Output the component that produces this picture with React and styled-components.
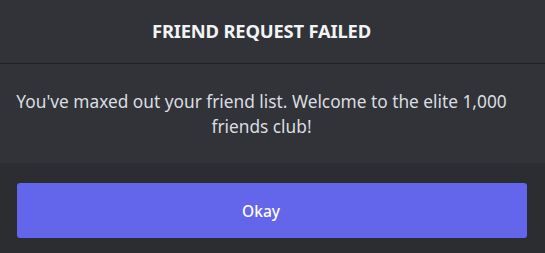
import React from "react";
import styled, { createGlobalStyle } from "styled-components";

const GlobalStyle = createGlobalStyle`
  html, body {
    margin: 0;
    padding: 0;
    background: #313338;
  }
  body {
    font-family: "Noto Sans", "Open Sans", sans-serif;
  }
`;

export default function App() {
  return (
    <>
      <GlobalStyle />
      <Modal>
        <Header>
          <Title>FRIEND REQUEST FAILED</Title>
        </Header>
        <Body>
          <Message>
            You've maxed out your friend list. Welcome to the elite 1,000
            friends club!
          </Message>
        </Body>
        <Footer>
          <Button>Okay</Button>
        </Footer>
      </Modal>
    </>
  );
}

// Styled Components
const Modal = styled.div`
  display: flex;
  flex-direction: column;
  width: 545px;
  height: 253px;
  background: #313338;
`;

const Header = styled.div`
  display: flex;
  align-items: center;
  justify-content: center;
  height: 60px;
  padding: 0 22px 3px 0;
  border-bottom: 1px solid #1f2023;
  box-sizing: content-box;
`;

const Title = styled.h1`
  margin: 0;
  font-size: 18.4px;
  font-weight: 700;
  color: #f2f3f5;
  letter-spacing: -0.2px;
`;

const Body = styled.div`
  display: flex;
  align-items: center;
  justify-content: center;
  height: 99px;
  padding: 0 28px 0 6px;
`;

const Message = styled.p`
  margin: 0;
  text-align: center;
  font-size: 17.3px;
  line-height: 25px;
  color: #dbdee1;
`;

const Footer = styled.div`
  flex: 1;
  display: flex;
  flex-direction: column;
  padding: 20px 18px 15px 17px;
  background: #2b2d31;
`;

const Button = styled.button`
  height: 55px;
  width: 100%;
  padding: 0 22px 0 0;
  border: none;
  border-radius: 3px;
  background: #6366ea;
  color: #ffffff;
  font-family: "Noto Sans", "Open Sans", sans-serif;
  font-size: 15.5px;
  font-weight: 500;
  cursor: pointer;
`;
